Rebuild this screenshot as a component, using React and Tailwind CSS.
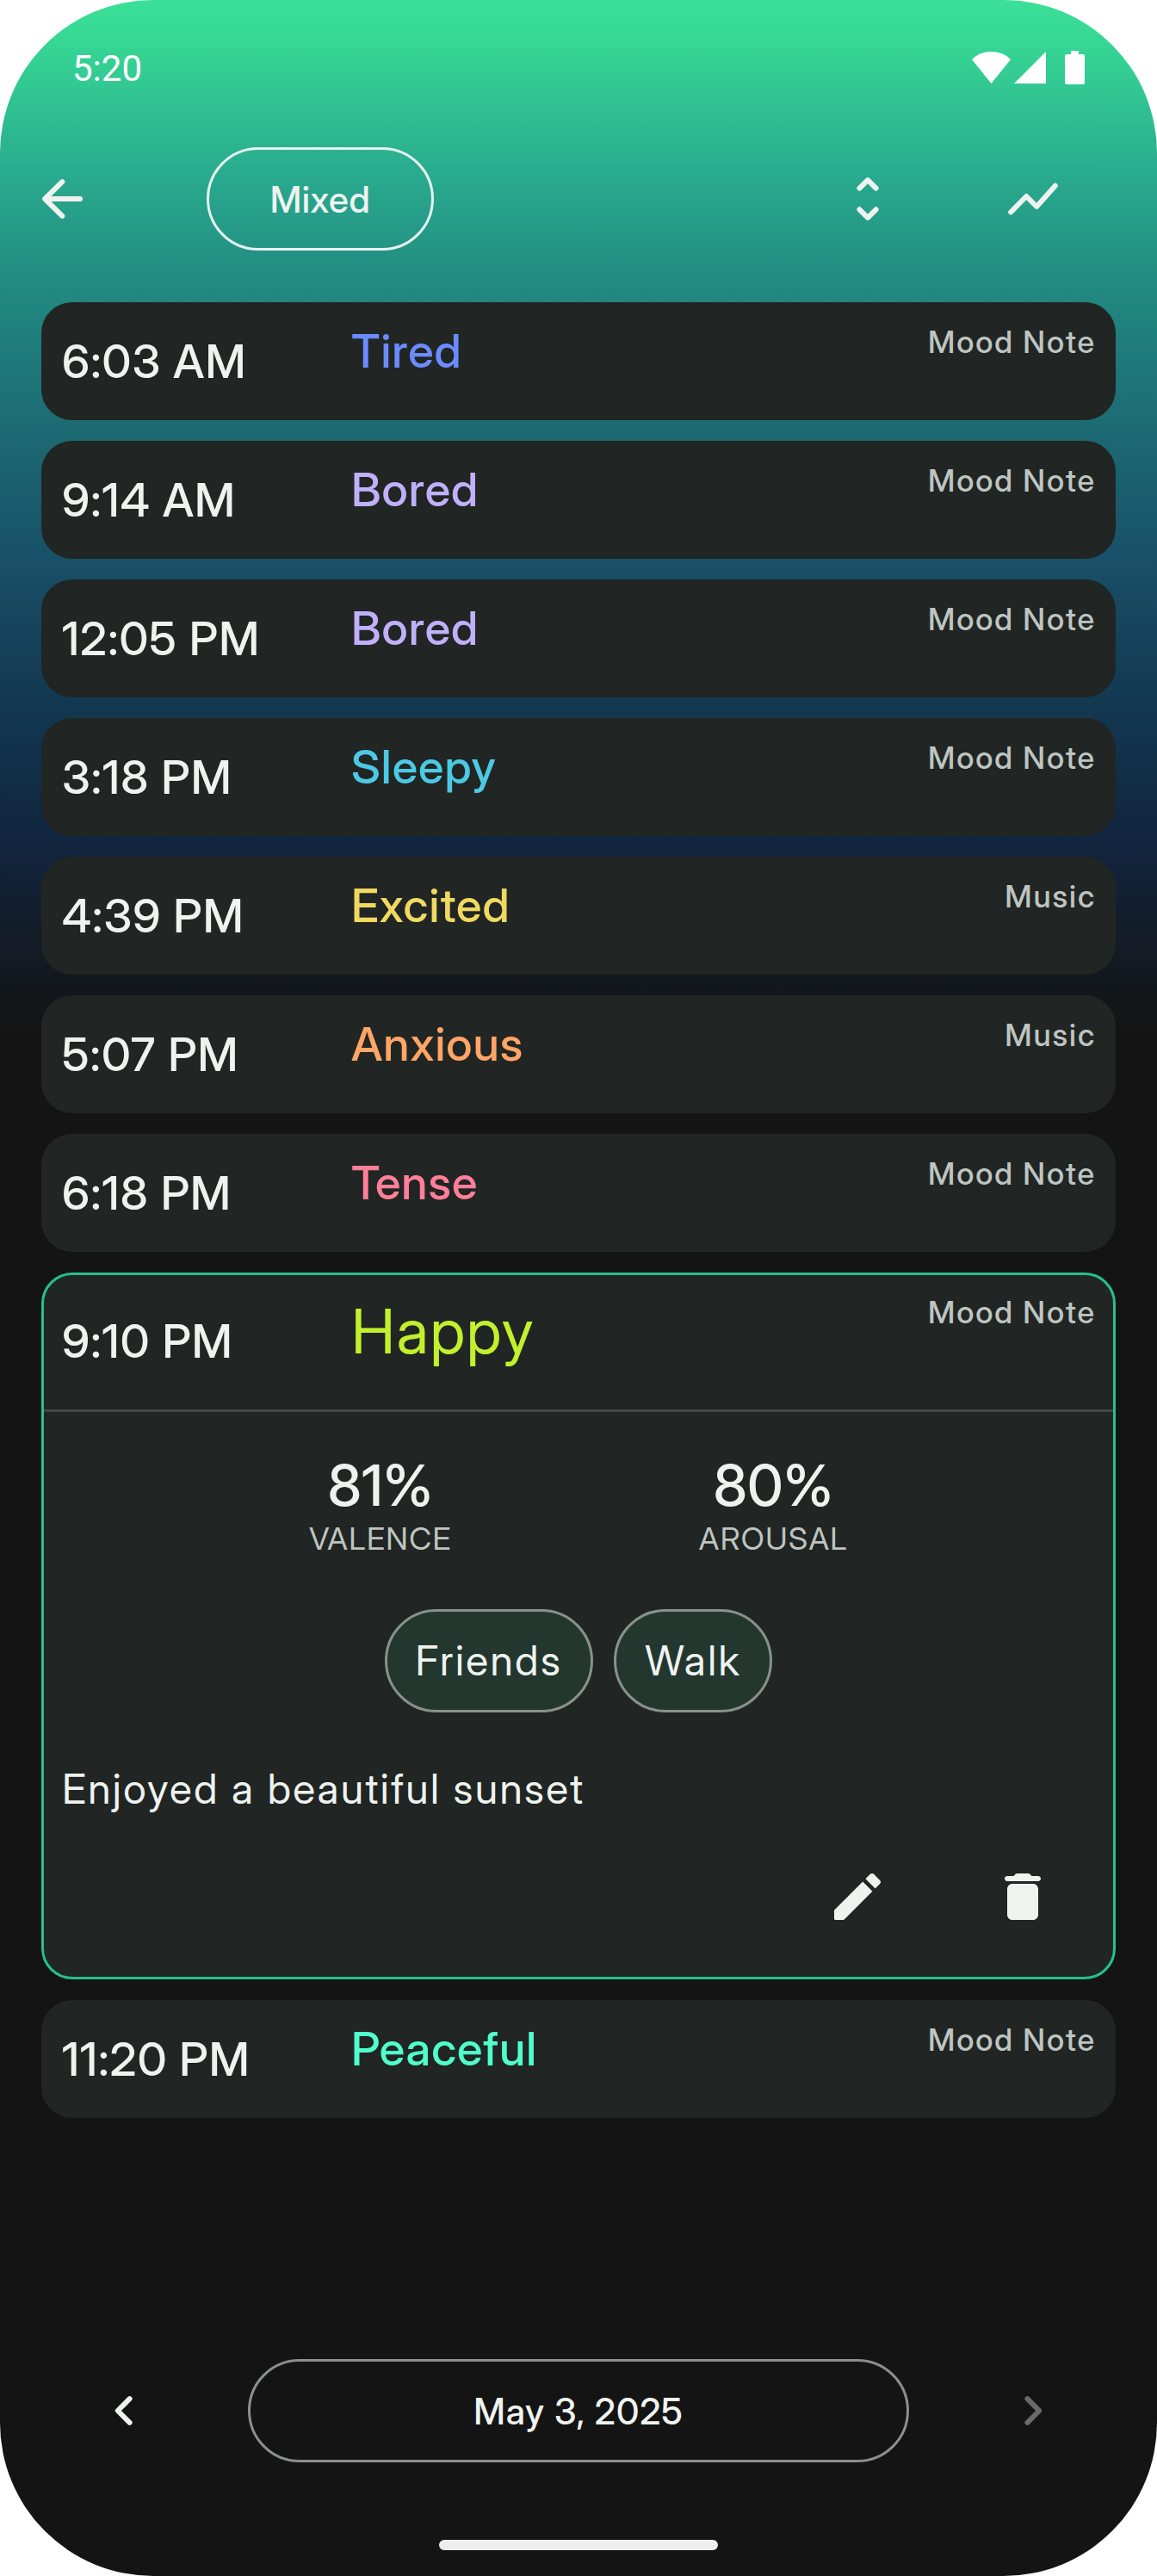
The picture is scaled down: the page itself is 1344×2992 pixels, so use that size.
import { useState } from 'react'

const entries = [
  { id: 1, time: '6:03 AM', mood: 'Tired', color: 'text-[#6b8cff]', source: 'Mood Note' },
  { id: 2, time: '9:14 AM', mood: 'Bored', color: 'text-[#c0b0fa]', source: 'Mood Note' },
  { id: 3, time: '12:05 PM', mood: 'Bored', color: 'text-[#c0b0fa]', source: 'Mood Note' },
  { id: 4, time: '3:18 PM', mood: 'Sleepy', color: 'text-[#4cc9e4]', source: 'Mood Note' },
  { id: 5, time: '4:39 PM', mood: 'Excited', color: 'text-[#f0d961]', source: 'Music' },
  { id: 6, time: '5:07 PM', mood: 'Anxious', color: 'text-[#ffa566]', source: 'Music' },
  { id: 7, time: '6:18 PM', mood: 'Tense', color: 'text-[#ff7f98]', source: 'Mood Note' },
  {
    id: 8,
    time: '9:10 PM',
    mood: 'Happy',
    color: 'text-[#c3f02c]',
    source: 'Mood Note',
    valence: 81,
    arousal: 80,
    tags: ['Friends', 'Walk'],
    note: 'Enjoyed a beautiful sunset',
  },
  { id: 9, time: '11:20 PM', mood: 'Peaceful', color: 'text-[#50ffcb]', source: 'Mood Note' },
]

function StrokeIcon({ d }) {
  return (
    <svg
      viewBox="0 0 24 24"
      className="size-[72px]"
      fill="none"
      stroke="currentColor"
      strokeWidth="2"
      strokeLinecap="round"
      strokeLinejoin="round"
    >
      <path d={d} />
    </svg>
  )
}

function FilledIcon({ d }) {
  return (
    <svg viewBox="0 0 24 24" className="size-[72px]" fill="currentColor">
      <path d={d} />
    </svg>
  )
}

function StatusBar() {
  return (
    <div className="flex h-[135px] items-start justify-between pl-[84px] pr-[84px] text-white">
      <span className="mt-[55px] font-[Roboto] text-[42px] leading-[50px]">5:20</span>
      <svg viewBox="0 0 131 40" className="mt-[59px] h-10 w-[131px]" fill="currentColor">
        <path d="M0 10Q9 1 22.500 1T45 10L22.500 38Z" />
        <path d="M49 38H86V1Z" />
        <path d="M115 0h9v4h5q2 0 2 2v31q0 2-2 2h-19q-2 0-2-2v-31q0-2 2-2h5z" />
      </svg>
    </div>
  )
}

function TopBar() {
  return (
    <header className="flex h-48 items-center pl-9 pr-[108px]">
      <button type="button" aria-label="Back">
        <StrokeIcon d="M12.100 5.400 5.400 12l6.700 6.600M5.400 12H19" />
      </button>
      <button
        type="button"
        className="ml-[132px] h-[120px] w-[264px] rounded-full border-3 border-[#e6f2ee] text-[42px] font-medium tracking-[0.6px]"
      >
        Mixed
      </button>
      <div className="ml-auto flex gap-[120px]">
        <button type="button" aria-label="Expand all">
          <StrokeIcon d="M8.800 7.900 12 4.700l3.200 3.200M8.800 16.100 12 19.300l3.200-3.200" />
        </button>
        <button type="button" aria-label="Chart">
          <StrokeIcon d="M3.400 17.100 9.400 11l4 4 7.200-8.100" />
        </button>
      </div>
    </header>
  )
}

function Stat({ value, label }) {
  return (
    <div className="flex flex-col items-center">
      <span className="text-[66px] font-medium leading-20 tracking-[0.3px]">{value}%</span>
      <span className="text-4xl leading-11 tracking-[1.4px] text-[#bec5c1]">{label}</span>
    </div>
  )
}

function EntryDetails({ entry }) {
  return (
    <div className="border-t-3 border-[#414745] px-[21px] pt-[45px]">
      <div className="flex justify-evenly">
        <Stat value={entry.valence} label="VALENCE" />
        <Stat value={entry.arousal} label="AROUSAL" />
      </div>
      <div className="mt-[60px] flex justify-center gap-6">
        {entry.tags.map((tag) => (
          <span
            key={tag}
            className="flex h-[120px] items-center rounded-full border-3 border-[#88918d] bg-[#23372f] px-[33px] text-5xl tracking-[2.5px]"
          >
            {tag}
          </span>
        ))}
      </div>
      <p className="mt-[53px] text-5xl leading-[72px] tracking-[2.4px]">{entry.note}</p>
      <div className="mt-[53px] flex justify-end gap-[120px] pr-12">
        <button type="button" aria-label="Edit">
          <FilledIcon d="M3 17.460v3.040c0 .28.22.5.5.5h3.040c.13 0 .26-.05.35-.15L17.810 9.940l-3.750-3.750L3.150 17.100c-.1.1-.15.22-.15.36zM20.710 7.040c.39-.39.39-1.020 0-1.410l-2.340-2.340c-.39-.39-1.020-.39-1.410 0l-1.830 1.830 3.750 3.750 1.830-1.830z" />
        </button>
        <button type="button" aria-label="Delete">
          <FilledIcon d="M6 19c0 1.100.9 2 2 2h8c1.100 0 2-.9 2-2V9c0-1.100-.9-2-2-2H8c-1.100 0-2 .9-2 2v10zM18 4h-2.500l-.71-.71c-.18-.18-.44-.29-.7-.29H9.910c-.26 0-.52.11-.7.29L8.500 4H6c-.55 0-1 .45-1 1s.45 1 1 1h12c.55 0 1-.45 1-1s-.45-1-1-1z" />
        </button>
      </div>
    </div>
  )
}

function EntryCard({ entry, open, onToggle }) {
  return (
    <article
      className={`rounded-[36px] border-3 bg-[#212523] ${
        open ? 'h-[821px] border-[#26c08b]' : 'h-[137px] border-[#212523]'
      }`}
    >
      <div
        onClick={onToggle}
        className={`flex items-start pl-[21px] pr-5 ${open ? 'h-[156px]' : 'h-[131px]'}`}
      >
        <span
          className={`w-[336px] text-[54px] font-medium leading-[66px] tracking-[1.05px] ${
            open ? 'mt-11' : 'mt-[33px]'
          }`}
        >
          {entry.time}
        </span>
        <span
          className={`${entry.color} ${
            open
              ? 'mt-[17px] text-7xl leading-24 tracking-[1.6px]'
              : 'mt-[21px] text-[54px] font-medium leading-[66px] tracking-[1px]'
          }`}
        >
          {entry.mood}
        </span>
        <span className="ml-auto mt-[21px] text-4xl font-medium leading-11 tracking-[1.9px] text-[#bec5c1]">
          {entry.source}
        </span>
      </div>
      {open && entry.tags ? <EntryDetails entry={entry} /> : null}
    </article>
  )
}

function DateBar() {
  return (
    <footer className="mt-auto flex items-center justify-between px-[108px]">
      <button type="button" aria-label="Previous day">
        <StrokeIcon d="M14.200 7.400 9.600 12l4.600 4.600" />
      </button>
      <button
        type="button"
        className="h-[120px] w-[768px] rounded-full border-3 border-[#8b8f8d] text-[42px] font-medium tracking-[1px]"
      >
        May 3, 2025
      </button>
      <button type="button" aria-label="Next day" disabled className="text-[#696a69]">
        <StrokeIcon d="M9.800 7.400 14.400 12l-4.600 4.600" />
      </button>
    </footer>
  )
}

export default function App() {
  const [openId, setOpenId] = useState(8)

  return (
    <div className="h-[2992px] w-[1344px] bg-white">
      <main className="flex h-full flex-col overflow-hidden rounded-[178px] bg-[#141414] bg-[linear-gradient(180deg,#3ae097_0px,#37d995_40px,#2aae8f_190px,#228b82_325px,#1c6a73_500px,#184e66_660px,#123850_820px,#12243e_985px,#13181d_1140px,#141414_1200px)] font-['Inter_Display',Inter,sans-serif] text-[#eff3f0]">
        <StatusBar />
        <TopBar />
        <section className="mt-6 flex flex-col gap-6 px-12">
          {entries.map((entry) => (
            <EntryCard
              key={entry.id}
              entry={entry}
              open={entry.id === openId}
              onToggle={() => setOpenId(entry.id === openId ? null : entry.id)}
            />
          ))}
        </section>
        <DateBar />
        <div className="mx-auto mb-[30px] mt-[90px] h-3 w-[324px] shrink-0 rounded-full bg-[#eeeeee]" />
      </main>
    </div>
  )
}
